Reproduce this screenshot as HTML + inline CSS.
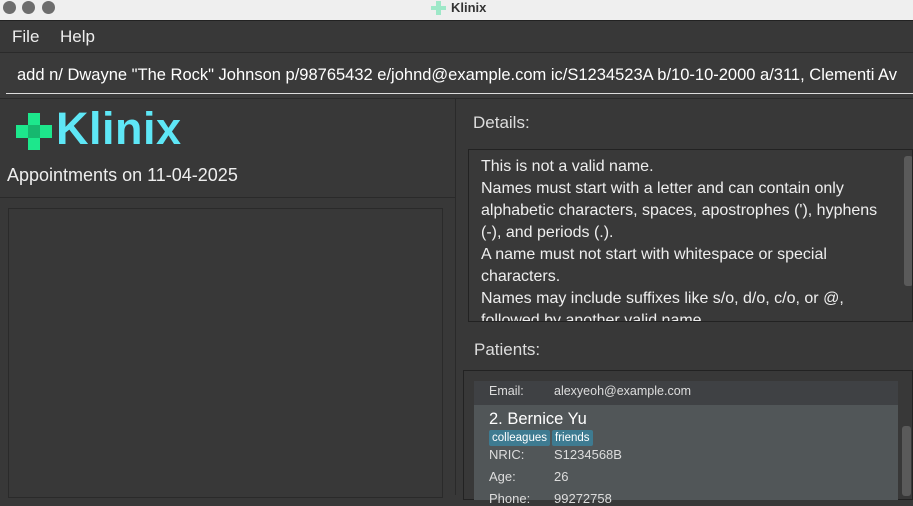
<!DOCTYPE html>
<html><head><style>
*{margin:0;padding:0;box-sizing:border-box}
body{width:913px;height:495px;overflow:hidden;background:#383838;font-family:"Liberation Sans",sans-serif;color:#fff;position:relative}
.abs{position:absolute}
</style></head><body>
<div class="abs" style="left:0;top:0;width:913px;height:21px;background:#efefef;border-bottom:1px solid #222"></div>
<div class="abs" style="left:3px;top:1px;width:13px;height:13px;border-radius:50%;background:#6d6d6d"></div>
<div class="abs" style="left:22px;top:1px;width:13px;height:13px;border-radius:50%;background:#6d6d6d"></div>
<div class="abs" style="left:42px;top:1px;width:13px;height:13px;border-radius:50%;background:#6d6d6d"></div>
<svg class="abs" style="left:431px;top:1px" width="16" height="14"><path d="M5 0h5v5h5v4h-5v5H5V9H0V5h5z" fill="#9ee8c8"/></svg>
<div class="abs" style="left:451px;top:0;font-size:13px;font-weight:bold;color:#333;line-height:15px">Klinix</div>
<div class="abs" style="left:0;top:22px;width:913px;height:31px;background:#383838;border-bottom:1px solid #2a2a2a"></div>
<div class="abs" style="left:12px;top:27px;font-size:17px;color:#eee">File</div>
<div class="abs" style="left:60px;top:27px;font-size:17px;color:#eee">Help</div>
<div class="abs" style="left:0;top:53px;width:913px;height:45px;background:#3a3a3a"></div>
<div class="abs" style="left:17px;top:66px;font-size:16.5px;color:#fff;white-space:nowrap">add n/ Dwayne "The Rock" Johnson p/98765432 e/johnd@example.com ic/S1234523A b/10-10-2000 a/311, Clementi Av</div>
<div class="abs" style="left:6px;top:93px;width:907px;height:1px;background:#ddd"></div>
<div class="abs" style="left:0;top:98px;width:913px;height:1px;background:#2a2a2a"></div>
<div class="abs" style="left:455px;top:99px;width:1px;height:396px;background:#2a2a2a"></div>
<svg class="abs" style="left:16px;top:113px" width="37" height="37"><path d="M12 0h12v12h12v13H24v12H12V25H0V12h12z" fill="#1de78c"/><rect x="12" y="12" width="12" height="13" fill="#16b86f"/></svg>
<div class="abs" style="left:56px;top:103px;font-size:45px;font-weight:bold;color:#5ee7f6;letter-spacing:0.5px;line-height:52px">Klinix</div>
<div class="abs" style="left:7px;top:165px;font-size:18px;color:#eee">Appointments on 11-04-2025</div>
<div class="abs" style="left:0;top:197px;width:455px;height:1px;background:#2a2a2a"></div>
<div class="abs" style="left:8px;top:208px;width:435px;height:290px;border:1px solid #2a2a2a;background:#383838"></div>
<div class="abs" style="left:473px;top:113px;font-size:17px;color:#ddd">Details:</div>
<div class="abs" style="left:468px;top:149px;width:445px;height:173px;border:1px solid #222;background:#393939;overflow:hidden">
<div style="padding:6px 0 0 12px;font-size:16px;line-height:22px;color:#eee;width:420px">This is not a valid name.<br>Names must start with a letter and can contain only alphabetic characters, spaces, apostrophes ('), hyphens (-), and periods (.).<br>A name must not start with whitespace or special characters.<br>Names may include suffixes like s/o, d/o, c/o, or @, followed by another valid name.</div>
<div class="abs" style="left:435px;top:6px;width:9px;height:130px;background:#5a5a5a;border-radius:3px"></div>
</div>
<div class="abs" style="left:474px;top:340px;font-size:17px;color:#ddd">Patients:</div>
<div class="abs" style="left:463px;top:370px;width:450px;height:130px;border:1px solid #222;background:#383838"></div>
<div class="abs" style="left:474px;top:381px;width:424px;height:24px;background:#3f4144"></div>
<div class="abs" style="left:489px;top:384px;font-size:12.5px;color:#ddd">Email:</div>
<div class="abs" style="left:554px;top:384px;font-size:12.5px;color:#ddd">alexyeoh@example.com</div>
<div class="abs" style="left:474px;top:405px;width:424px;height:95px;background:#515658"></div>
<div class="abs" style="left:489px;top:410px;font-size:16.5px;color:#fff">2. Bernice Yu</div>
<div class="abs" style="left:489px;top:430px;height:16px;padding:0 3px;background:#3e7b91;border-radius:2px;font-size:11.5px;line-height:16px">colleagues</div>
<div class="abs" style="left:552px;top:430px;height:16px;padding:0 3px;background:#3e7b91;border-radius:2px;font-size:11.5px;line-height:16px">friends</div>
<div class="abs" style="left:489px;top:447px;font-size:13px;color:#ddd">NRIC:</div>
<div class="abs" style="left:554px;top:447px;font-size:13px;color:#ddd">S1234568B</div>
<div class="abs" style="left:489px;top:469px;font-size:13px;color:#ddd">Age:</div>
<div class="abs" style="left:554px;top:469px;font-size:13px;color:#ddd">26</div>
<div class="abs" style="left:489px;top:491px;font-size:13px;color:#ddd">Phone:</div>
<div class="abs" style="left:554px;top:491px;font-size:13px;color:#ddd">99272758</div>
<div class="abs" style="left:902px;top:426px;width:9px;height:70px;background:#5a5a5a;border-radius:3px"></div>
</body></html>
